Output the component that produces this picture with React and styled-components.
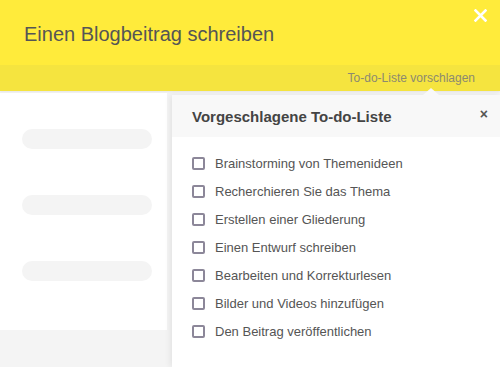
import React from "react";
import styled, { createGlobalStyle } from "styled-components";

const Global = createGlobalStyle`
  html, body { margin: 0; padding: 0; }
  body {
    background: #f4f4f4;
    font-family: "Liberation Sans", Arial, sans-serif;
    width: 500px;
    height: 367px;
    overflow: hidden;
  }
`;

const Page = styled.div`
  position: relative;
  width: 500px;
  height: 367px;
  overflow: hidden;
  background: #f4f4f4;
`;

const Header = styled.header`
  position: relative;
  height: 65px;
  background: #ffeb3b;
  display: flex;
  align-items: center;
  padding: 4px 0 0 24px;
  box-sizing: border-box;
`;

const Title = styled.h1`
  margin: 0;
  font-size: 20px;
  font-weight: normal;
  color: #555555;
`;

const CloseBtn = styled.button`
  position: absolute;
  top: 6px;
  right: 11px;
  border: 0;
  background: none;
  padding: 0;
  width: 18px;
  height: 18px;
  display: flex;
  align-items: center;
  justify-content: center;
  cursor: pointer;
`;

const SubBar = styled.div`
  height: 26px;
  background: #f5e43f;
  display: flex;
  align-items: center;
  justify-content: flex-end;
  padding-right: 25px;
  box-shadow: 0 1px 2px rgba(0,0,0,0.06);
`;

const SuggestLink = styled.span`
  font-size: 12px;
  color: #8c8a70;
`;

const Main = styled.div`
  padding-top: 2px;
`;

const Card = styled.div`
  width: 167px;
  height: 237px;
  background: #ffffff;
  padding: 36px 0 0 22px;
  box-sizing: border-box;
  display: flex;
  flex-direction: column;
  gap: 46px;
`;

const Skeleton = styled.div`
  width: 130px;
  height: 20px;
  border-radius: 10px;
  background: #f4f4f4;
`;

const Popover = styled.div`
  position: absolute;
  left: 172px;
  top: 95px;
  right: 0;
  bottom: 0;
  background: #ffffff;
  box-shadow: -2px 0 6px rgba(0,0,0,0.07);
`;

const Arrow = styled.div`
  position: absolute;
  top: -7px;
  left: 251px;
  width: 0;
  height: 0;
  border-left: 8px solid transparent;
  border-right: 8px solid transparent;
  border-bottom: 7px solid #f8f8f8;
`;

const PopHeader = styled.div`
  height: 42px;
  background: #f8f8f8;
  display: flex;
  align-items: center;
  justify-content: space-between;
  padding: 0 12px 0 20px;
`;

const PopTitle = styled.h2`
  margin: 0;
  font-size: 15px;
  font-weight: bold;
  color: #444444;
`;

const SmallClose = styled.button`
  border: 0;
  background: none;
  padding: 0;
  margin-top: -4px;
  font-family: "Liberation Sans", Arial, sans-serif;
  font-size: 14px;
  font-weight: bold;
  color: #555555;
  cursor: pointer;
`;

const List = styled.ul`
  list-style: none;
  margin: 0;
  padding: 18px 0 0 20px;
  display: flex;
  flex-direction: column;
  gap: 12px;
`;

const Item = styled.li`
  display: flex;
  align-items: center;
  gap: 10px;
  height: 16px;
  font-size: 13px;
  color: #555555;
`;

const Box = styled.span`
  box-sizing: border-box;
  width: 13px;
  height: 13px;
  border: 2px solid #8c8799;
  border-radius: 2px;
  flex: none;
`;

const items = [
  "Brainstorming von Themenideen",
  "Recherchieren Sie das Thema",
  "Erstellen einer Gliederung",
  "Einen Entwurf schreiben",
  "Bearbeiten und Korrekturlesen",
  "Bilder und Videos hinzufügen",
  "Den Beitrag veröffentlichen",
];

export default function App() {
  return (
    <Page>
      <Global />
      <Header>
        <Title>Einen Blogbeitrag schreiben</Title>
        <CloseBtn aria-label="Schließen">
          <svg width="13" height="13" viewBox="0 0 13 13">
            <path d="M1.5 1.5 L11.5 11.5 M11.5 1.5 L1.5 11.5" stroke="#ffffff" strokeWidth="2.6" strokeLinecap="square" />
          </svg>
        </CloseBtn>
      </Header>
      <SubBar>
        <SuggestLink>To-do-Liste vorschlagen</SuggestLink>
      </SubBar>
      <Main>
        <Card>
          <Skeleton />
          <Skeleton />
          <Skeleton />
        </Card>
      </Main>
      <Popover>
        <Arrow />
        <PopHeader>
          <PopTitle>Vorgeschlagene To-do-Liste</PopTitle>
          <SmallClose aria-label="Schließen">×</SmallClose>
        </PopHeader>
        <List>
          {items.map((t) => (
            <Item key={t}>
              <Box />
              {t}
            </Item>
          ))}
        </List>
      </Popover>
    </Page>
  );
}
